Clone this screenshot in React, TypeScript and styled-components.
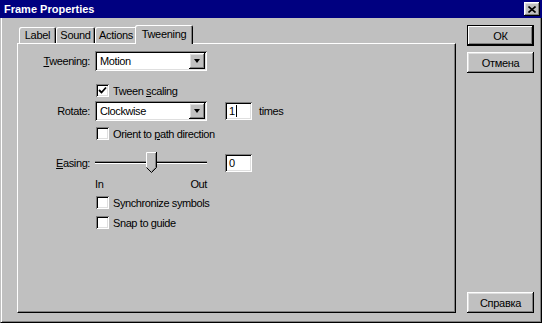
import React from "react"
import styled, { createGlobalStyle } from "styled-components"

const GlobalStyle = createGlobalStyle`
  html, body {
    margin: 0;
    padding: 0;
    background: #c0c0c0;
  }
  * {
    box-sizing: border-box;
  }
`

const raised = `
  box-shadow: inset -1px -1px #000, inset 1px 1px #fff, inset -2px -2px #808080, inset 2px 2px #dfdfdf;
`

const sunken = `
  box-shadow: inset 1px 1px #808080, inset -1px -1px #fff, inset 2px 2px #000, inset -2px -2px #dfdfdf;
`

const Window = styled.div`
  width: 542px;
  height: 323px;
  display: flex;
  flex-direction: column;
  background: #c0c0c0;
  font-family: "Liberation Sans", Arial, sans-serif;
  font-size: 11px;
  color: #000;
`

const TitleBar = styled.div`
  height: 18px;
  flex-shrink: 0;
  display: flex;
  align-items: center;
  justify-content: space-between;
  padding: 0 2px 0 4px;
  background: #000080;
  color: #fff;
`

const Title = styled.span`
  font-weight: bold;
  font-size: 11px;
`

const CloseButton = styled.div`
  width: 16px;
  height: 14px;
  display: flex;
  align-items: center;
  justify-content: center;
  background: #c0c0c0;
  ${raised}
`

const Frame = styled.div`
  flex: 1;
  display: flex;
  border-left: 1px solid #c0c0c0;
  border-right: 1px solid #000;
  border-bottom: 1px solid #000;
  box-shadow: inset 1px 0 #fff, inset -1px -1px #808080;
  padding: 7px 7px 9px 16px;
`

const TabControl = styled.div`
  width: 439px;
  display: flex;
  flex-direction: column;
`

const TabStrip = styled.div`
  height: 18px;
  display: flex;
  align-items: flex-end;
  padding-left: 2px;
`

const Tab = styled.div<{ $active?: boolean; $w: number }>`
  position: relative;
  z-index: ${(p) => (p.$active ? 1 : 0)};
  width: ${(p) => p.$w + (p.$active ? 4 : 0)}px;
  height: ${(p) => (p.$active ? 19 : 16)}px;
  margin: 0 ${(p) => (p.$active ? -2 : 0)}px ${(p) => (p.$active ? -1 : 0)}px;
  padding-bottom: ${(p) => (p.$active ? 1 : 0)}px;
  display: flex;
  align-items: center;
  justify-content: center;
  background: #c0c0c0;
  border-radius: 2px 2px 0 0;
  box-shadow: inset 1px 1px #fff, inset -1px 0 #000, inset -2px 0 #808080;
  letter-spacing: -0.3px;
`

const Panel = styled.div`
  flex: 1;
  display: flex;
  flex-direction: column;
  border-top: 1px solid #fff;
  border-left: 1px solid #fff;
  border-right: 1px solid #000;
  border-bottom: 1px solid #000;
  box-shadow: inset -1px -1px #808080;
  padding-top: 7px;
  letter-spacing: -0.4px;
`

const Row = styled.div<{ $h: number; $mt: number; $indent?: number }>`
  display: flex;
  align-items: center;
  height: ${(p) => p.$h}px;
  margin-top: ${(p) => p.$mt}px;
  padding-left: ${(p) => p.$indent ?? 0}px;
`

const FieldLabel = styled.span`
  width: 72px;
  margin-right: 5px;
  text-align: right;
`

const U = styled.span`
  text-decoration: underline;
`

const Combo = styled.div`
  width: 112px;
  height: 20px;
  display: flex;
  align-items: center;
  padding: 2px;
  background: #fff;
  ${sunken}
`

const ComboText = styled.span`
  flex: 1;
  padding-left: 3px;
`

const ComboArrow = styled.div`
  width: 16px;
  height: 16px;
  display: flex;
  align-items: center;
  justify-content: center;
  background: #c0c0c0;
  ${raised}

  &::after {
    content: "";
    border-left: 3.5px solid transparent;
    border-right: 3.5px solid transparent;
    border-top: 4px solid #000;
  }
`

const NumberField = styled.div`
  width: 27px;
  height: 18px;
  margin-left: 18px;
  display: flex;
  align-items: center;
  padding-left: 4px;
  background: #fff;
  ${sunken}
`

const Caret = styled.span`
  width: 1px;
  height: 12px;
  margin-left: 1px;
  background: #000;
`

const Suffix = styled.span`
  margin-left: 7px;
`

const CheckBox = styled.div`
  width: 13px;
  height: 13px;
  display: flex;
  align-items: center;
  justify-content: center;
  background: #fff;
  ${sunken}
`

const CheckText = styled.span`
  margin-left: 4px;
`

const Slider = styled.div`
  position: relative;
  width: 112px;
  height: 21px;
  display: flex;
  align-items: center;
`

const Track = styled.div`
  flex: 1;
  height: 3px;
  border-top: 1px solid #808080;
  border-bottom: 1px solid #fff;
  background: #000;
`

const Thumb = styled.svg`
  position: absolute;
  top: 0;
`

const Scale = styled.div`
  width: 112px;
  display: flex;
  justify-content: space-between;
`

const ButtonColumn = styled.div`
  width: 67px;
  margin-left: 11px;
  display: flex;
  flex-direction: column;
  gap: 6px;
`

const Button = styled.button<{ $default?: boolean }>`
  width: 67px;
  height: 21px;
  padding: 0;
  margin: 0;
  background: #c0c0c0;
  font-family: inherit;
  font-size: 11px;
  color: #000;
  letter-spacing: -0.3px;
  border: ${(p) => (p.$default ? "1px solid #000" : "none")};
  box-shadow: ${(p) =>
    p.$default
      ? "inset -1px -1px #000, inset 1px 1px #fff, inset -2px -2px #808080"
      : "inset -1px -1px #000, inset 1px 1px #fff, inset -2px -2px #808080, inset 2px 2px #dfdfdf"};
`

const HelpButton = styled(Button)`
  margin-top: auto;
`

const Check = ({ checked }: { checked?: boolean }) => (
  <CheckBox>
    {checked && (
      <svg width="9" height="9" viewBox="0 0 9 9">
        <polyline points="1,4 3.5,6.5 8,1.5" fill="none" stroke="#000" strokeWidth="1.8" />
      </svg>
    )}
  </CheckBox>
)

const easing = 0
const thumbLeft = Math.round(((easing + 100) / 200) * (112 - 11))

const tabs = [
  { label: "Label", w: 37 },
  { label: "Sound", w: 39 },
  { label: "Actions", w: 42 },
  { label: "Tweening", w: 54, active: true },
]

const App: React.FC = () => {
  return (
    <>
      <GlobalStyle />
      <Window>
        <TitleBar>
          <Title>Frame Properties</Title>
          <CloseButton>
            <svg width="8" height="7" viewBox="0 0 8 7">
              <path d="M0.5 0.5 L7.5 6.5 M7.5 0.5 L0.5 6.5" stroke="#000" strokeWidth="1.6" />
            </svg>
          </CloseButton>
        </TitleBar>
        <Frame>
          <TabControl>
            <TabStrip>
              {tabs.map((t) => (
                <Tab key={t.label} $w={t.w} $active={t.active}>
                  {t.label}
                </Tab>
              ))}
            </TabStrip>
            <Panel>
              <Row $h={20} $mt={0}>
                <FieldLabel>
                  <U>T</U>weening:
                </FieldLabel>
                <Combo>
                  <ComboText>Motion</ComboText>
                  <ComboArrow />
                </Combo>
              </Row>
              <Row $h={13} $mt={13} $indent={78}>
                <Check checked />
                <CheckText>
                  Tween <U>s</U>caling
                </CheckText>
              </Row>
              <Row $h={20} $mt={4}>
                <FieldLabel>Rotate:</FieldLabel>
                <Combo>
                  <ComboText>Clockwise</ComboText>
                  <ComboArrow />
                </Combo>
                <NumberField>
                  1<Caret />
                </NumberField>
                <Suffix>times</Suffix>
              </Row>
              <Row $h={13} $mt={6} $indent={78}>
                <Check />
                <CheckText>
                  Orient to <U>p</U>ath direction
                </CheckText>
              </Row>
              <Row $h={21} $mt={12}>
                <FieldLabel>
                  <U>E</U>asing:
                </FieldLabel>
                <Slider>
                  <Track />
                  <Thumb width="11" height="21" viewBox="0 0 11 21" style={{ left: thumbLeft }}>
                    <path d="M0.5 0.5 H10.5 V15.5 L5.5 20.5 L0.5 15.5 Z" fill="#c0c0c0" />
                    <path d="M0.5 15.5 V0.5 H10" fill="none" stroke="#fff" />
                    <path d="M9.5 1 V15.3 L5.5 19.3" fill="none" stroke="#808080" />
                    <path d="M10.5 0 V15.5 L5.5 20.5 L0.5 15.5" fill="none" stroke="#000" />
                  </Thumb>
                </Slider>
                <NumberField>0</NumberField>
              </Row>
              <Row $h={13} $mt={4} $indent={77}>
                <Scale>
                  <span>In</span>
                  <span>Out</span>
                </Scale>
              </Row>
              <Row $h={13} $mt={6} $indent={78}>
                <Check />
                <CheckText>Synchronize symbols</CheckText>
              </Row>
              <Row $h={13} $mt={7} $indent={78}>
                <Check />
                <CheckText>Snap to guide</CheckText>
              </Row>
            </Panel>
          </TabControl>
          <ButtonColumn>
            <Button $default>ОК</Button>
            <Button>Отмена</Button>
            <HelpButton>Справка</HelpButton>
          </ButtonColumn>
        </Frame>
      </Window>
    </>
  )
}

export default App
